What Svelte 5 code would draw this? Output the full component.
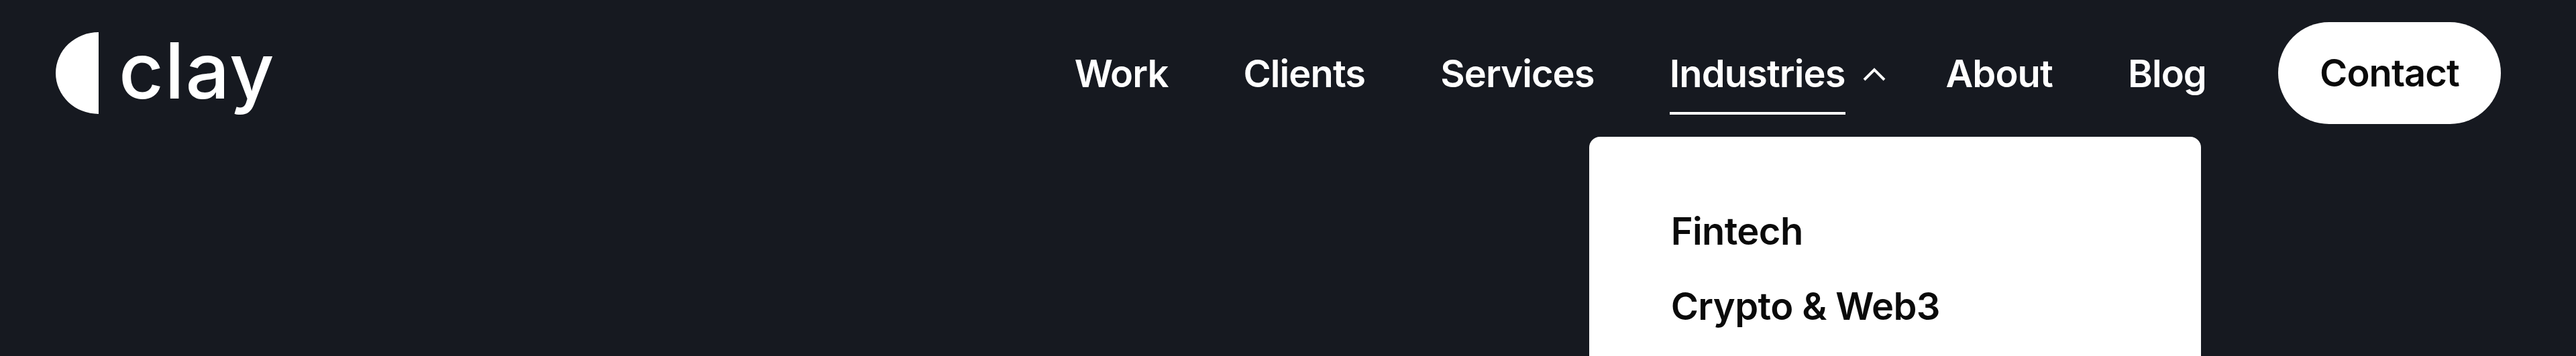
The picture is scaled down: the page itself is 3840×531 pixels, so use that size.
<script lang="ts">
  const links = ["Work", "Clients", "Services"];
  const after = ["About", "Blog"];
  const industries = ["Fintech", "Crypto & Web3"];
</script>

<header class="header">
  <a class="logo" href="#home" aria-label="clay">
    <svg width="64" height="122" viewBox="0 0 64 122" aria-hidden="true">
      <path d="M64 0A64 61 0 0 0 64 122Z" fill="#fff" />
    </svg>
    <span class="wordmark">clay</span>
  </a>

  <nav class="nav">
    {#each links as link (link)}
      <a class="link" href="#top">{link}</a>
    {/each}

    <div class="dropdown">
      <a class="link active" href="#top">Industries</a>
      <svg class="chevron" width="34" height="20" viewBox="0 0 34 20" aria-hidden="true">
        <path d="M2 18 17 3l15 15" fill="none" stroke="#fff" stroke-width="4" />
      </svg>
      <ul class="menu">
        {#each industries as item (item)}
          <li><a class="item" href="#top">{item}</a></li>
        {/each}
      </ul>
    </div>

    {#each after as link (link)}
      <a class="link" href="#top">{link}</a>
    {/each}

    <a class="contact" href="#top">Contact</a>
  </nav>
</header>

<style>
  :global(body) {
    background: #161920;
    height: 531px;
    overflow: hidden;
  }
  .header {
    display: flex;
    align-items: center;
    justify-content: space-between;
    padding: 33px 112px 0 83px;
    font-family: Inter, "Liberation Sans", sans-serif;
    color: #fff;
  }
  a {
    color: inherit;
    text-decoration: none;
  }
  .logo {
    display: flex;
    align-items: center;
    gap: 30px;
  }
  .wordmark {
    margin-bottom: 8px;
    font-size: 116px;
    font-weight: 500;
    line-height: 122px;
    letter-spacing: 1.6px;
  }
  .nav {
    display: flex;
    align-items: center;
    gap: 112px;
    font-size: 56px;
    font-weight: 600;
    line-height: 80px;
    letter-spacing: -0.9px;
  }
  .link {
    position: relative;
    display: block;
    padding-top: 2px;
  }
  .active::after {
    content: "";
    position: absolute;
    left: 0;
    right: 0;
    top: 99px;
    height: 4px;
    background: #fff;
  }
  .dropdown {
    position: relative;
    display: flex;
    align-items: center;
    gap: 26px;
    margin-right: -22px;
  }
  .chevron {
    flex: none;
    margin-top: 4px;
  }
  .menu {
    position: absolute;
    top: 136px;
    left: -120px;
    width: 912px;
    height: 600px;
    box-sizing: border-box;
    margin: 0;
    padding: 101px 122px;
    list-style: none;
    display: flex;
    flex-direction: column;
    gap: 32px;
    background: #fff;
    border-radius: 16px;
    color: #0a0a0a;
    letter-spacing: -0.6px;
  }
  .contact {
    display: flex;
    align-items: center;
    justify-content: center;
    width: 332px;
    height: 152px;
    margin-left: -5px;
    border-radius: 76px;
    background: #fff;
    color: #0a0a0a;
  }
</style>
